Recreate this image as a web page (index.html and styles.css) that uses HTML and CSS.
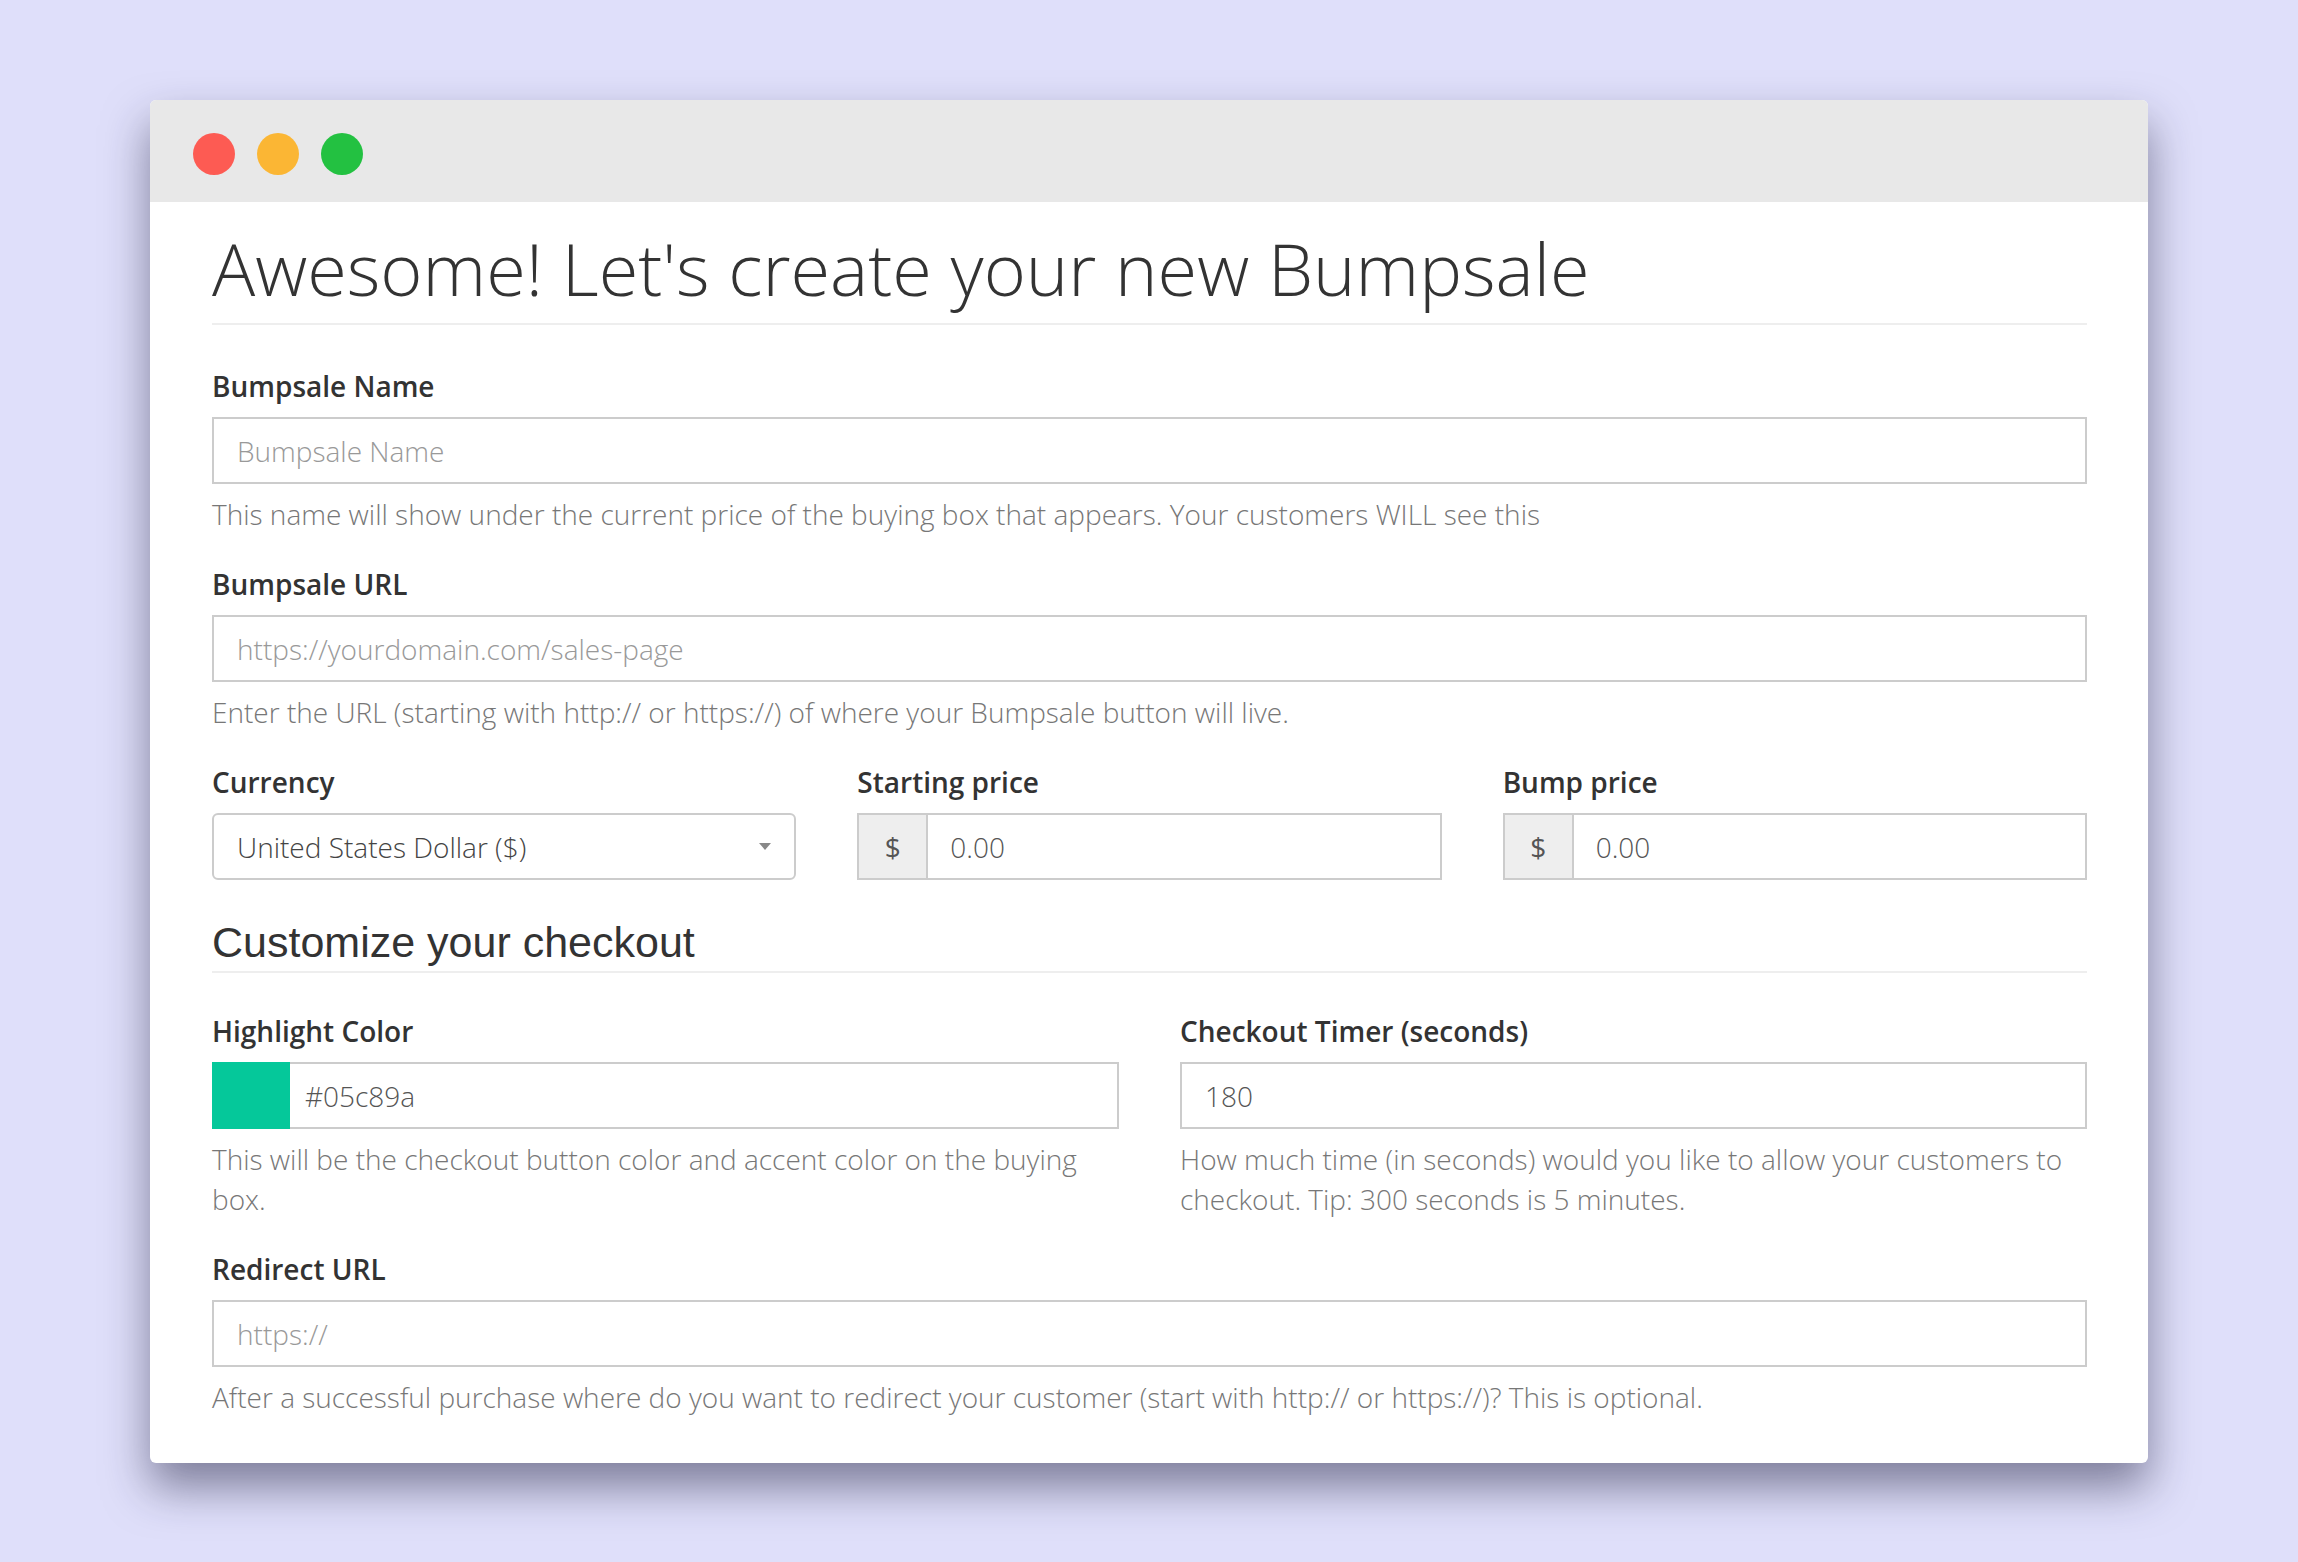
FILE: index.html
```html
<!DOCTYPE html>
<html lang="en">
<head>
    <meta charset="UTF-8">
    <meta name="viewport" content="width=device-width, initial-scale=1.0">
    <title>Create Bumpsale</title>
    <link rel="stylesheet" href="styles.css">
</head>
<body>
    <div class="window">
        <div class="titlebar">
            <span class="dot red"></span>
            <span class="dot yellow"></span>
            <span class="dot green"></span>
        </div>
        <div class="content">
            <h1>Awesome! Let's create your new Bumpsale</h1>

            <div class="form-group">
                <label>Bumpsale Name</label>
                <input type="text" class="field" placeholder="Bumpsale Name">
                <p class="help">This name will show under the current price of the buying box that appears. Your customers WILL see this</p>
            </div>

            <div class="form-group">
                <label>Bumpsale URL</label>
                <input type="text" class="field" placeholder="https://yourdomain.com/sales-page">
                <p class="help">Enter the URL (starting with http:// or https://) of where your Bumpsale button will live.</p>
            </div>

            <div class="row three">
                <div class="form-group">
                    <label>Currency</label>
                    <div class="select">
                        <span>United States Dollar ($)</span>
                        <svg width="12" height="7" viewBox="0 0 12 7"><path d="M0 0h12L6 7z" fill="#888"/></svg>
                    </div>
                </div>
                <div class="form-group">
                    <label>Starting price</label>
                    <div class="input-group">
                        <span class="addon">$</span>
                        <input type="text" class="inner" value="0.00">
                    </div>
                </div>
                <div class="form-group">
                    <label>Bump price</label>
                    <div class="input-group">
                        <span class="addon">$</span>
                        <input type="text" class="inner" value="0.00">
                    </div>
                </div>
            </div>

            <h3>Customize your checkout</h3>

            <div class="row two">
                <div class="form-group">
                    <label>Highlight Color</label>
                    <div class="input-group">
                        <span class="swatch"></span>
                        <input type="text" class="inner color" value="#05c89a">
                    </div>
                    <p class="help">This will be the checkout button color and accent color on the buying box.</p>
                </div>
                <div class="form-group">
                    <label>Checkout Timer (seconds)</label>
                    <input type="text" class="field filled" value="180">
                    <p class="help">How much time (in seconds) would you like to allow your customers to checkout. Tip: 300 seconds is 5 minutes.</p>
                </div>
            </div>

            <div class="form-group last">
                <label>Redirect URL</label>
                <input type="text" class="field" placeholder="https://">
                <p class="help">After a successful purchase where do you want to redirect your customer (start with http:// or https://)? This is optional.</p>
            </div>
        </div>
    </div>
</body>
</html>
```

FILE: styles.css
```css
body {
    margin: 0;
    background: #dfdffa;
    font-family: "Open Sans", Arial, sans-serif;
    color: #333;
}

.window {
    width: 1998px;
    margin: 100px 0 100px 150px;
    background: #fff;
    border-radius: 6px;
    box-shadow: 0 24px 45px rgba(30, 30, 60, 0.5);
    overflow: hidden;
}

.titlebar {
    height: 102px;
    background: #e8e8e8;
    display: flex;
    align-items: center;
    gap: 22px;
    padding: 6px 0 0 43px;
    box-sizing: border-box;
}

.dot {
    width: 42px;
    height: 42px;
    border-radius: 50%;
}

.red { background: #fd5b53; }
.yellow { background: #fbb634; }
.green { background: #23c141; }

.content {
    padding: 24px 61px 46px 62px;
}

h1 {
    margin: 0 0 43px;
    font-size: 72px;
    font-weight: 300;
    line-height: 84px;
    padding-bottom: 13px;
    border-bottom: 2px solid #eee;
    color: #333;
}

h3 {
    margin: 7px 0 40px;
    font-family: "Liberation Sans", Arial, sans-serif;
    font-size: 43px;
    font-weight: 400;
    line-height: 46px;
    padding-bottom: 6px;
    border-bottom: 2px solid #eee;
    color: #333;
}

.form-group {
    margin-bottom: 32px;
}

.form-group.last {
    margin-bottom: 0;
}

label {
    display: block;
    font-size: 28px;
    font-weight: 600;
    line-height: 36px;
    margin-bottom: 13px;
    color: #333;
}

.field,
.input-group,
.select {
    display: flex;
    width: 100%;
    height: 67px;
    box-sizing: border-box;
    border: 2px solid #ccc;
    background: #fff;
}

.field,
.inner {
    font-family: "Open Sans", Arial, sans-serif;
    font-size: 28px;
    font-weight: 300;
    color: #555;
    padding: 0 23px;
    outline: none;
}

.field::placeholder {
    color: #999;
}

.input-group .inner {
    flex: 1;
    border: none;
    min-width: 0;
    padding-left: 22px;
}

.input-group .inner.color {
    padding-left: 15px;
}

.addon {
    width: 67px;
    flex: none;
    background: #eee;
    border-right: 2px solid #ccc;
    display: flex;
    align-items: center;
    justify-content: center;
    font-size: 28px;
    color: #555;
}

.swatch {
    width: 78px;
    flex: none;
    margin: -2px 0 -2px -2px;
    background: #05c89a;
}

.select {
    border-radius: 6px;
    align-items: center;
    justify-content: space-between;
    padding: 0 23px 0 23px;
    font-size: 28px;
    font-weight: 300;
    color: #444;
}

.help {
    margin: 10px 0 0;
    font-size: 28px;
    font-weight: 300;
    line-height: 40px;
    color: #777;
}

.row {
    display: grid;
    column-gap: 61px;
}

.row.three {
    grid-template-columns: 1fr 1fr 1fr;
}

.row.two {
    grid-template-columns: 1fr 1fr;
}
```
